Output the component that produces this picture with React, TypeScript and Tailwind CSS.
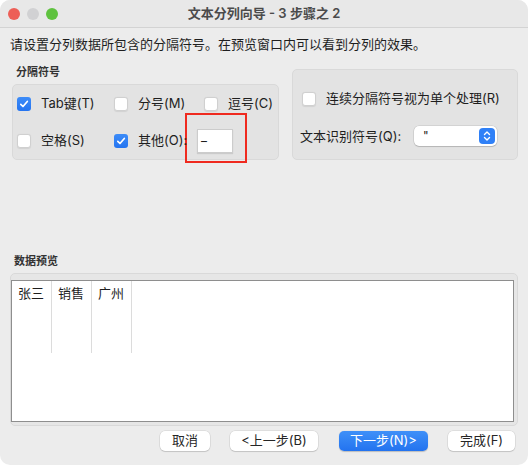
import React from 'react';

const Check = ({ on }: { on?: boolean }) =>
  on ? (
    <span className="w-[14px] h-[14px] rounded-[3px] bg-gradient-to-b from-[#3d8cf8] to-[#2474f0] flex items-center justify-center shrink-0">
      <svg width="10" height="10" viewBox="0 0 10 10">
        <path d="M1.8 5.3 L4 7.5 L8.3 2.5" stroke="white" strokeWidth="1.7" fill="none" strokeLinecap="round" strokeLinejoin="round" />
      </svg>
    </span>
  ) : (
    <span className="w-[14px] h-[14px] rounded-[3px] bg-white border border-[#d0d0d0] shadow-[0_0.5px_1px_rgba(0,0,0,0.08)] shrink-0" />
  );

const Option = ({ label, on, className = '' }: { label: string; on?: boolean; className?: string }) => (
  <div className={`flex items-center gap-[10px] ${className}`}>
    <Check on={on} />
    <span className="whitespace-nowrap">{label}</span>
  </div>
);

const Button = ({ label, width, primary }: { label: string; width: string; primary?: boolean }) => (
  <div
    className={`${width} h-[20px] rounded-[5px] flex items-center justify-center text-[13px] ${
      primary
        ? 'bg-gradient-to-b from-[#3f90f8] to-[#2373ef] text-white shadow-[0_0.5px_1px_rgba(0,0,0,0.2)]'
        : 'bg-white text-[#262626] shadow-[0_0_0_0.5px_rgba(0,0,0,0.12),0_1px_1px_rgba(0,0,0,0.12)]'
    }`}
  >
    {label}
  </div>
);

const preview = ['张三', '销售', '广州'];

export default function App() {
  return (
    <div className="w-[528px] h-[465px] bg-white font-[Inter,'Noto_Sans_CJK_SC',sans-serif]">
      <div className="w-[528px] h-[465px] rounded-[10px] overflow-hidden bg-[#ececec] flex flex-col text-[#1e1e1e]">
        {/* title bar */}
        <div className="h-[28px] shrink-0 grid grid-cols-[1fr_auto_1fr] items-center bg-[#e8e8e8] border-b border-[#d3d3d3]">
          <div className="flex items-center gap-[7px] pl-[8px]">
            <span className="w-[12px] h-[12px] rounded-full bg-[#ed5f57]" />
            <span className="w-[12px] h-[12px] rounded-full bg-[#d1d1d3]" />
            <span className="w-[12px] h-[12px] rounded-full bg-[#5fc23f]" />
          </div>
          <div className="text-[13px] font-semibold text-[#4b4b4b]">文本分列向导 - 3 步骤之 2</div>
          <div />
        </div>

        <div className="flex flex-col px-[10px]">
          <div className="mt-[8px] text-[13px] leading-[16px]">请设置分列数据所包含的分隔符号。在预览窗口内可以看到分列的效果。</div>

          <div className="mt-[13px] flex items-end justify-between">
            {/* delimiters */}
            <div className="flex flex-col ml-[2px]">
              <div className="text-[11px] font-semibold leading-[14px] pl-[4px] text-[#333]">分隔符号</div>
              <div className="mt-[5px] w-[267px] h-[76px] rounded-[5px] bg-[#e3e3e3] border border-[#d9d9d9] pl-[4px] pt-[9px] text-[13px]">
                <div className="h-[20px] flex items-center">
                  <Option label="Tab键(T)" on className="w-[97px]" />
                  <Option label="分号(M)" className="w-[90px]" />
                  <Option label="逗号(C)" />
                </div>
                <div className="mt-[15px] h-[24px] flex items-center">
                  <Option label="空格(S)" className="w-[97px]" />
                  <Option label="其他(O):" on className="w-[83px] relative z-10" />
                  <div className="relative w-[36px] h-[24px] bg-white border border-[#cccccc] shadow-[0_1px_1px_rgba(0,0,0,0.1)] flex items-center pl-[3px] pb-[9px] text-[13px] leading-none">
                    _
                    <div className="absolute left-[-13px] top-[-17px] w-[62px] h-[50px] border-2 border-[#ef2a1f]" />
                  </div>
                </div>
              </div>
            </div>

            {/* options */}
            <div className="w-[226px] h-[91px] rounded-[5px] bg-[#e3e3e3] border border-[#d9d9d9] pl-[7px] pt-[19px] text-[13px]">
              <Option label="连续分隔符号视为单个处理(R)" className="h-[20px] pl-[2px]" />
              <div className="mt-[16px] h-[21px] flex items-center">
                <span className="w-[114px] pt-[3px]">文本识别符号(Q):</span>
                <div className="w-[83px] h-[20px] rounded-[5px] bg-white shadow-[0_0_0_0.5px_rgba(0,0,0,0.14),0_1px_1px_rgba(0,0,0,0.14)] flex items-center justify-between pl-[9px] pr-[2px]">
                  <span className="text-[12px] text-[#222]">"</span>
                  <span className="w-[16px] h-[16px] rounded-[4px] bg-[#2f80f7] flex items-center justify-center">
                    <svg width="10" height="12" viewBox="0 0 10 12">
                      <path d="M2.5 4.5 L5 2 L7.5 4.5 M2.5 7.5 L5 10 L7.5 7.5" stroke="white" strokeWidth="1.4" fill="none" strokeLinecap="round" strokeLinejoin="round" />
                    </svg>
                  </span>
                </div>
              </div>
            </div>
          </div>

          {/* data preview */}
          <div className="mt-[94px] text-[11px] font-semibold leading-[14px] pl-[4px] text-[#333]">数据预览</div>
          <div className="mt-[5px] h-[153px] rounded-[5px] bg-[#e6e6e6] border border-[#d9d9d9] pt-[6px] pr-[3px]">
            <div className="w-[503px] h-[142px] bg-white border border-[#8e8e8e] flex items-start">
              {preview.map((v) => (
                <div key={v} className="w-[40px] h-[72px] border-r border-[#dcdcdc] pl-[6px] pt-[4px] text-[13px] leading-[16px] text-[#1e1e1e]">
                  {v}
                </div>
              ))}
            </div>
          </div>

          <div className="mt-[5px] flex justify-end pr-[3px]">
            <Button label="取消" width="w-[50px]" />
            <div className="w-[20px]" />
            <Button label="<上一步(B)" width="w-[88px]" />
            <div className="w-[21px]" />
            <Button label="下一步(N)>" width="w-[89px]" primary />
            <div className="w-[20px]" />
            <Button label="完成(F)" width="w-[67px]" />
          </div>
        </div>
      </div>
    </div>
  );
}
